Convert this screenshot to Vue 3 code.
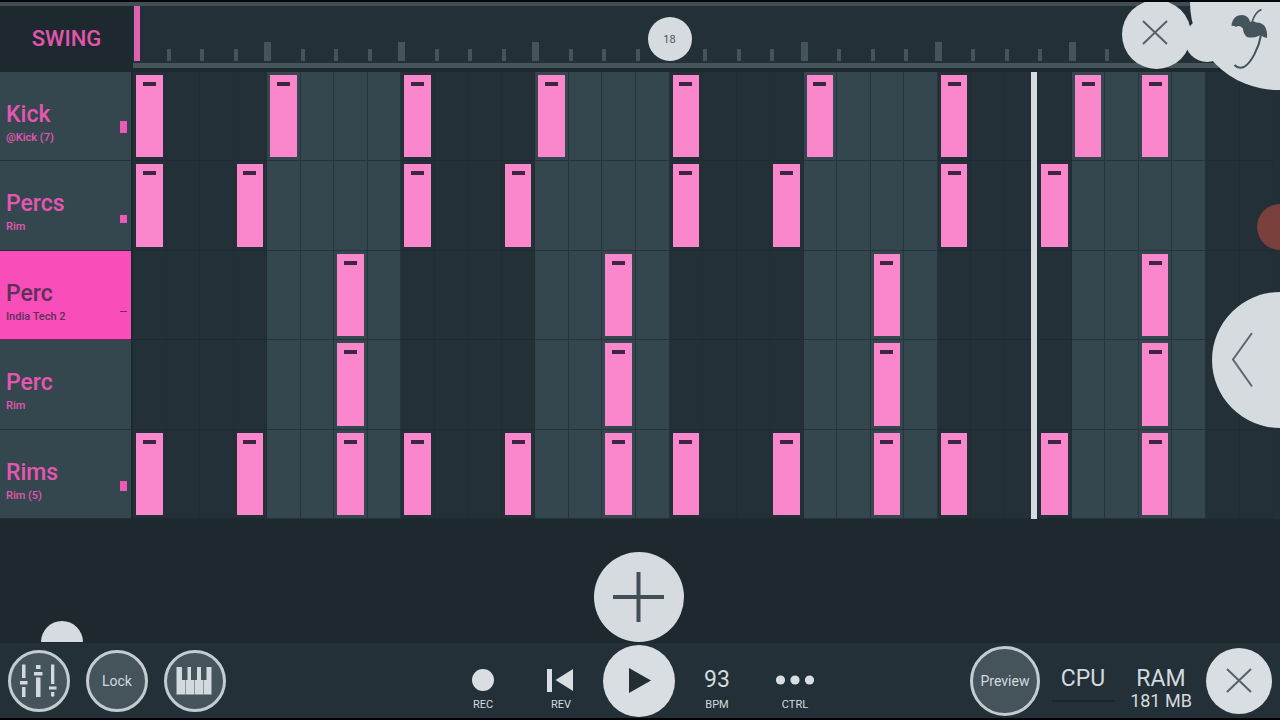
<script setup>
import { ref } from 'vue'

const channels = ref([
  { name: 'Kick', sample: '@Kick (7)', level: 12, steps: [0, 4, 8, 12, 16, 20, 24, 28, 30] },
  { name: 'Percs', sample: 'Rim', level: 8, steps: [0, 3, 8, 11, 16, 19, 24, 27] },
  { name: 'Perc', sample: 'India Tech 2', level: 1, steps: [6, 14, 22, 30], selected: true },
  { name: 'Perc', sample: 'Rim', level: 0, steps: [6, 14, 22, 30] },
  { name: 'Rims', sample: 'Rim (5)', level: 10, steps: [0, 3, 6, 8, 11, 14, 16, 19, 22, 24, 27, 30] }
])
const stepCount = 32
const playhead = 26.86
const swing = ref(16)

function select(channel) {
  channels.value.forEach((c) => { c.selected = c === channel })
}
function toggle(channel, step) {
  const at = channel.steps.indexOf(step)
  if (at < 0) channel.steps.push(step)
  else channel.steps.splice(at, 1)
}
</script>

<template>
  <main class="app">
    <header class="top">
      <div class="swing"><label for="swing">SWING</label></div>
      <div class="ruler">
        <div class="ticks">
          <span v-for="n in stepCount" :key="n" class="tick" :class="{ first: n === 1, beat: n % 4 === 1 }"></span>
        </div>
        <div class="slider">
          <input id="swing" v-model="swing" type="range" min="0" max="32">
          <output for="swing">18</output>
        </div>
        <div class="rail"></div>
      </div>
    </header>

    <section class="rack">
      <div v-for="(ch, i) in channels" :key="i" class="row">
        <button class="channel" :class="{ selected: ch.selected }" @click="select(ch)">
          <span class="name">{{ ch.name }}</span>
          <span class="sample">{{ ch.sample }}</span>
          <span class="level" :style="{ height: ch.level + 'px' }"></span>
        </button>
        <div class="steps">
          <button
            v-for="n in stepCount"
            :key="n"
            class="step"
            :class="{ shade: (n - 1) % 8 > 3 }"
            :aria-label="ch.name + ' step ' + n"
            :aria-pressed="ch.steps.includes(n - 1)"
            @click="toggle(ch, n - 1)"
          ><span v-if="ch.steps.includes(n - 1)" class="note"></span></button>
        </div>
        <div class="beyond"><span></span><span></span></div>
      </div>
      <div class="lane"><div class="playhead" :style="{ left: (playhead / stepCount) * 100 + '%' }"></div></div>
    </section>

    <section class="middle">
      <button class="add" aria-label="Add channel">
        <svg viewBox="0 0 90 90"><path d="M19 45h51M44.500 20v50" stroke="#434f56" stroke-width="4" fill="none" /></svg>
      </button>
      <button class="peek" aria-label="Show panel"></button>
    </section>

    <footer class="bar">
      <div class="group">
        <div class="slot">
          <button class="ring" aria-label="Mixer">
            <svg viewBox="3 3 56 56" fill="#d3dadf">
              <path d="M14 14.500h3.500V28H14zM14 37h3.500v10H14zM12 31h7.500v3.500H12z" />
              <path d="M28 15h4.500v4H28zM28 27.500h4.500V47H28zM26 22h8.500v3.500H26z" />
              <path d="M43 14.500h3.300V34H43zM43 42h3.300v4l-1.600 1-1.700-1zM41 36.500h7.500v3H41z" />
            </svg>
          </button>
        </div>
        <div class="slot"><button class="ring">Lock</button></div>
        <div class="slot">
          <button class="ring" aria-label="Keyboard">
            <svg viewBox="3 3 56 56" fill="#d3dadf">
              <path d="M12.500 17H18v13h3.500v14.500h-9zM23.500 17H27v13h3v14.500h-8V30h1.500zM33 17h4v13h2.500v14.500h-9V30H33zM42.500 17h5v27.500H40V30h2.500z" />
            </svg>
          </button>
        </div>
      </div>

      <div class="group">
        <button class="slot tool">
          <svg class="glyph" viewBox="0 0 40 26"><circle cx="20" cy="13" r="11" fill="#d8dee2" /></svg>
          <small>REC</small>
        </button>
        <button class="slot tool">
          <svg class="glyph" viewBox="0 0 40 26" fill="#d8dee2"><path d="M6 2h5v23H6zM32 2v22L14.500 13z" /></svg>
          <small>REV</small>
        </button>
        <div class="slot">
          <button class="play" aria-label="Play">
            <svg viewBox="0 0 72 72"><path d="M26 23v25l22-12.500z" fill="#242d32" /></svg>
          </button>
        </div>
        <button class="slot tool"><span class="value">93</span><small>BPM</small></button>
        <button class="slot tool">
          <svg class="glyph" viewBox="0 0 40 26" fill="#d8dee2"><circle cx="5.500" cy="13" r="4.600" /><circle cx="20" cy="13" r="4.600" /><circle cx="34.500" cy="13" r="4.600" /></svg>
          <small>CTRL</small>
        </button>
      </div>

      <div class="group end">
        <div class="slot"><button class="ring large">Preview</button></div>
        <div class="slot meter"><span class="value">CPU</span><span class="load"></span></div>
        <div class="slot meter"><span class="value">RAM</span><span class="amount">181 MB</span></div>
        <div class="slot">
          <button class="close" aria-label="Close">
            <svg viewBox="0 0 66 66"><path d="M21 21l24 23M45 21L21 44" stroke="#56626a" stroke-width="2" fill="none" /></svg>
          </button>
        </div>
      </div>
    </footer>

    <div class="overlay corner">
      <span class="dot"></span>
      <button class="holiday" aria-label="Themes">
        <svg viewBox="0 0 176 176" fill="none" stroke="#44545b">
          <path d="M62 108C64 102 67 97 71.500 95.500" stroke-width="1.600" />
          <path d="M41.500 112C42 104 47 101 52 101C56 101 59.500 104 60 108C62 107 64 107 66 108.500C73 108 78 113 77 124L73.500 123Q71 120 68.500 122Q63 124.500 57 123Q53 120 53 114.500Q49 110.500 46 113Q44 111 41.500 112Z" fill="#44545b" stroke="none" />
          <path d="M71 121C69 134 61 149 54 153Q48 155 44.500 151" stroke-width="2" />
        </svg>
      </button>
      <button class="dismiss" aria-label="Close editor">
        <svg viewBox="0 0 69 69"><path d="M21 21l24 23M45 21L21 44" stroke="#56626a" stroke-width="2" fill="none" /></svg>
      </button>
    </div>
    <button class="overlay record" aria-label="Screen recorder"></button>
    <button class="overlay back" aria-label="Back">
      <svg viewBox="0 0 136 136"><path d="M40 41L21 67.500l19 27" stroke="#5d686e" stroke-width="2" fill="none" /></svg>
    </button>
  </main>
</template>

<style>
body {
  margin: 0;
  background: #1e292f;
}
</style>

<style scoped>
.app {
  position: relative;
  box-sizing: border-box;
  display: flex;
  flex-direction: column;
  min-height: 100vh;
  overflow: hidden;
  border-top: 2px solid #050708;
  border-bottom: 2px solid #000;
  background: #1e292f;
  color: #d3dadf;
  font-family: Roboto, "Liberation Sans", sans-serif;
}
button {
  margin: 0;
  padding: 0;
  border: 0;
  background: none;
  color: inherit;
  font: inherit;
  cursor: pointer;
}
svg {
  display: block;
}

.top {
  display: flex;
  height: 66px;
  border-top: 4px solid #434e54;
}
.swing {
  display: flex;
  align-items: center;
  justify-content: center;
  box-sizing: border-box;
  flex: none;
  width: 133px;
  padding-bottom: 2px;
  color: #e354ae;
  font-size: 22px;
  font-weight: 500;
}
.ruler {
  position: relative;
  flex: 1;
  height: 62px;
  background: #243037;
}
.ticks,
.steps {
  display: grid;
  grid-template-columns: repeat(32, minmax(0, 1fr));
}
.ticks {
  align-items: end;
  height: 54px;
  margin-right: 74px;
}
.tick {
  width: 4px;
  height: 12px;
  background: #45535a;
}
.tick.beat {
  width: 7px;
  height: 19px;
  margin-left: -3px;
}
.tick.first {
  width: 6px;
  height: 55px;
  margin: 0 0 0 1px;
  align-self: start;
  background: #dd62b0;
}
.rail {
  height: 5px;
  margin-top: 3px;
  background: #46545b;
}
.slider {
  position: absolute;
  inset: 11px 74px 7px 0;
}
.slider input {
  display: block;
  width: 100%;
  height: 44px;
  margin: 0;
  appearance: none;
  background: transparent;
}
.slider input::-webkit-slider-thumb {
  appearance: none;
  width: 44px;
  height: 44px;
  border-radius: 50%;
  background: #d5dbdf;
}
.slider output {
  position: absolute;
  inset: 0;
  display: grid;
  place-items: center;
  color: #4b555b;
  font-size: 11px;
  pointer-events: none;
}

.rack {
  position: relative;
  flex: 447 0 0;
  display: grid;
  grid-auto-rows: minmax(80px, 1fr);
}
.row {
  display: flex;
}
.channel {
  position: relative;
  display: flex;
  flex-direction: column;
  flex: none;
  box-sizing: border-box;
  width: 131px;
  margin-right: 2px;
  padding: 29px 0 0 6px;
  border-bottom: 1px solid #233037;
  background: #34464e;
  color: #e556b2;
  text-align: left;
}
.name {
  font-size: 23px;
  font-weight: 500;
  line-height: 28px;
}
.sample {
  font-size: 11px;
  font-weight: 500;
  line-height: 18px;
}
.level {
  position: absolute;
  right: 4px;
  bottom: 27px;
  width: 7px;
  background: #ee59b8;
}
.selected {
  border-bottom-color: #74245c;
  background: #f94db9;
  color: #5b3259;
}
.selected .level {
  background: #7d285f;
}
.steps {
  flex: 1;
}
.step {
  display: flex;
  box-sizing: border-box;
  padding: 3px;
  border-right: 1px solid #212c33;
  border-bottom: 1px solid #1f2a31;
  background: #243037;
}
.step.shade {
  border-right-color: #25343c;
  border-bottom-color: #25343c;
  background: #34464e;
}
.note {
  flex: 1;
  align-self: stretch;
  background: #fa86cc;
}
.note::before {
  content: "";
  display: block;
  width: 13px;
  height: 4px;
  margin: 7px auto 0;
  background: #3e2542;
}
.beyond {
  display: grid;
  grid-template-columns: 34px 34px;
  flex: none;
  width: 74px;
  background: #243037;
}
.beyond span {
  border-right: 1px solid #212c33;
  border-bottom: 1px solid #1f2a31;
}
.lane {
  position: absolute;
  inset: 0 74px 0 133px;
  pointer-events: none;
}
.playhead {
  position: absolute;
  top: 0;
  bottom: 0;
  width: 6px;
  margin-left: -3px;
  background: #d5dbdf;
}

.middle {
  position: relative;
  flex: 124 0 0;
  display: flex;
  align-items: flex-end;
  justify-content: center;
  min-height: 110px;
  padding-right: 2px;
}
.add {
  width: 90px;
  height: 90px;
  margin-bottom: 1px;
  border-radius: 50%;
  background: #d5dbdf;
}
.peek {
  position: absolute;
  bottom: 1px;
  left: 41px;
  width: 42px;
  height: 21px;
  border-radius: 21px 21px 0 0;
  background: #d5dbdf;
}

.bar {
  display: grid;
  grid-template-columns: 1fr auto 1fr;
  height: 75px;
  padding-right: 2px;
  background: #243037;
}
.group {
  display: grid;
  grid-auto-flow: column;
  grid-auto-columns: 78px;
}
.end {
  justify-content: end;
}
.slot {
  display: flex;
  align-items: center;
  justify-content: center;
}
.ring {
  box-sizing: border-box;
  width: 62px;
  height: 62px;
  border: 3px solid #c3ccd1;
  border-radius: 50%;
  background: #45535b;
  font-size: 14px;
}
.ring svg {
  width: 56px;
}
.ring.large {
  width: 70px;
  height: 70px;
}
.play {
  width: 72px;
  height: 72px;
  border-radius: 50%;
  background: #d8dee2;
}
.close {
  width: 66px;
  height: 66px;
  border-radius: 50%;
  background: #d8dee2;
}
.tool,
.meter {
  flex-direction: column;
  justify-content: flex-start;
  padding-top: 24px;
}
.glyph {
  width: 40px;
  height: 26px;
}
.value {
  font-size: 23px;
  line-height: 26px;
}
.meter .value {
  line-height: 24px;
}
.tool small {
  margin-top: 5px;
  font-size: 11px;
  line-height: 14px;
}
.amount {
  font-size: 18px;
  line-height: 20px;
}
.load {
  width: 63px;
  height: 2px;
  margin-top: 9px;
  background: #1b252a;
}

.overlay {
  position: absolute;
}
.corner {
  top: -2px;
  right: -86px;
  width: 244px;
  height: 90px;
}
.corner > * {
  position: absolute;
  border-radius: 50%;
  background: #d5dbdf;
}
.dot {
  top: 18px;
  left: 63px;
  width: 44px;
  height: 44px;
}
.holiday {
  top: -86px;
  left: 68px;
  width: 176px;
  height: 176px;
}
.dismiss {
  top: 0;
  left: 0;
  width: 69px;
  height: 69px;
}
.record {
  top: 202px;
  right: -23px;
  width: 46px;
  height: 46px;
  border-radius: 50%;
  background: #7a403c;
}
.back {
  top: 290px;
  right: -68px;
  width: 136px;
  height: 136px;
  border-radius: 50%;
  background: #d5dbdf;
}
</style>
